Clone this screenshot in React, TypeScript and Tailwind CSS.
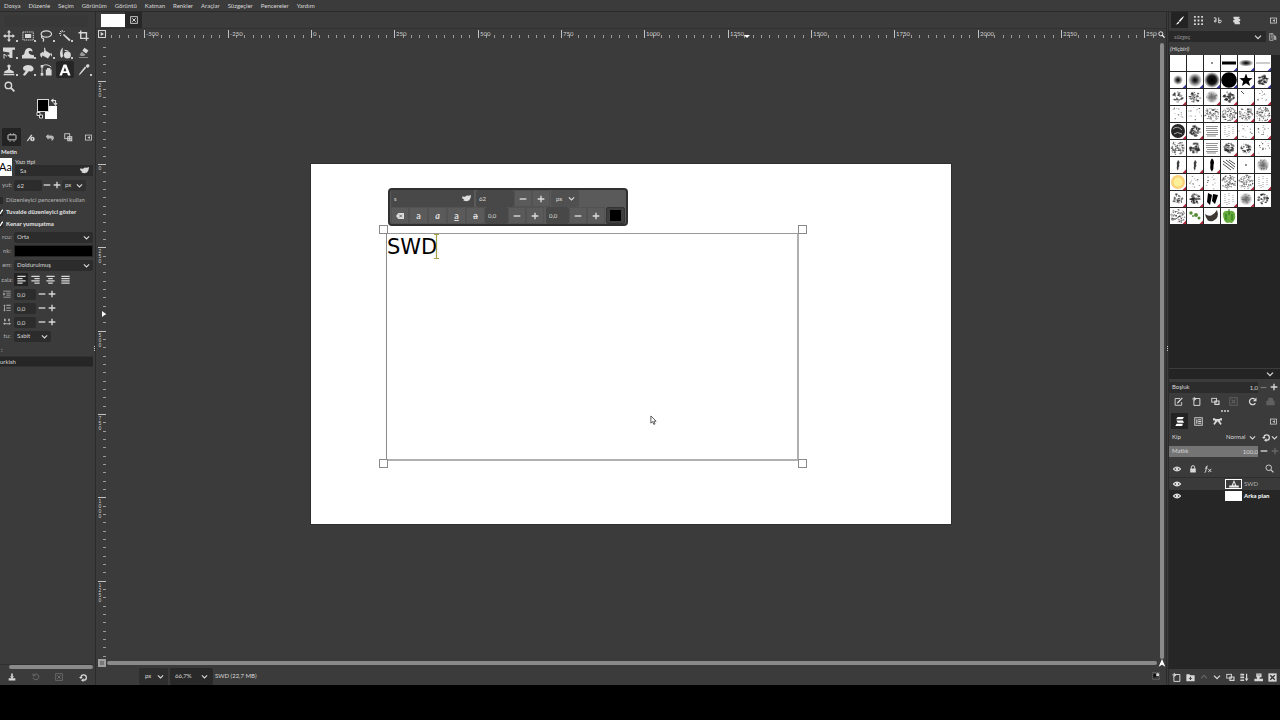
import React from "react";

type Kids = { children: React.ReactNode };

/* ---------- icons (12 x 12 grid) ---------- */

const glyphs = {
  move: <path d="M6 0 8 2.6H6.7V5.3H9.4V4L12 6 9.4 8V6.7H6.7V9.4H8L6 12 4 9.4H5.3V6.7H2.6V8L0 6 2.6 4V5.3H5.3V2.6H4Z" />,
  rect: (
    <>
      <rect x="0.9" y="2" width="10.4" height="8" fill="none" stroke="currentColor" strokeWidth="1" strokeDasharray="1.2 0.7" />
      <rect x="3" y="4" width="6.2" height="4" />
    </>
  ),
  lasso: (
    <g fill="none" stroke="currentColor" strokeWidth="1.2">
      <ellipse cx="6.3" cy="4" rx="5.2" ry="3.2" />
      <path d="M2 6Q.8 7.4 2.4 8.2 4.6 8.8 3 11.6" />
    </g>
  ),
  wand: (
    <>
      <path d="m5 3.9 6.6 5.9-1.3 1.4L3.9 5Z" />
      <path d="M3.2 0v2M0 3.4h2M1 1l1.4 1.4M5.6 1 4.6 2.2M1 5.8l1.2-1" stroke="currentColor" strokeWidth="1" />
    </>
  ),
  crop: <path d="M3 .5V9.200h8.700M.5 3H9.200v8.700" fill="none" stroke="currentColor" strokeWidth="1.500" />,
  transform: (
    <>
      <path d="M0 .4h12v2.3H9.4V11H7.2L4 7.8h2.4V5.4L0 4.5Z" />
      <path d="M1 7v4.6M1 7l3 2.4" stroke="currentColor" strokeWidth="1" fill="none" />
    </>
  ),
  warp: <path d="M0 11.6V8.2C2.4 8 2.5 6.6 2.8 4.8 3.3 1.8 5.8.4 8.4 1.2c2 .7 2.6 2.6 1.7 3.7-.8-1.5-2.6-1.7-3.2-.4C6.3 6 7.4 8 12 8.2v3.4Z" />,
  bucket: (
    <>
      <path d="m4.6 3 6.4 4-3 4.6L2 8.2Z" />
      <path d="M5.2 6.8 4.6.7M11 6.4l1 2.8" stroke="currentColor" strokeWidth="1.2" />
      <path d="M.2 6.6 3 4.8v1.8L1.8 10.8.3 9Z" />
    </>
  ),
  brush: (
    <>
      <path d="M2.4 11C.2 8 .6 3 4 .4 3.5 3 3.3 6.4 4.4 9Z" />
      <circle cx="8.4" cy="7.9" r="3.5" />
      <path d="m5.5 3.2 4 1" stroke="currentColor" />
    </>
  ),
  eraser: (
    <>
      <path d="m7 .8 4.400 3L9 7.200 4.800 4.200Z" />
      <path d="m4 5.200 4 2.900-1.200 1.700H3.400L1.600 8.600Z" opacity=".6" />
      <path d="M1 11.4h10" stroke="currentColor" strokeWidth=".8" opacity=".7" />
    </>
  ),
  stamp: <path d="M5 5.5V3.4A1.6 1.6 0 1 1 7 3.4v2.1l3.8 2V9H1.2V7.5ZM.6 9.8h10.8v1.4H.6Z" />,
  smudge: <path d="M1 3.8C2.2 1 6 .3 9 1.5c2.6 1 3.3 3.6 2 5.1C9.8 8 8 7.7 7 7L3 11.8.8 11 3.8 6.8Q1 7 1 3.8Z" />,
  path: (
    <>
      <path d="M2 11.5V2.2C5 0 8 .5 11.3 3" fill="none" stroke="currentColor" strokeWidth="1" />
      <rect x=".7" y="1" width="2.6" height="2.6" />
      <rect x=".7" y="9" width="2.6" height="2.6" />
      <path d="M7 4h3.4v1.6h1.2v6H5.8v-6H7Z" />
    </>
  ),
  text: <path d="M4.6.6h2.8l4.2 11H9l-.9-2.5H3.8L3 11.6H.4Zm1.3 2.7L4.5 7.2h2.9Z" fillRule="evenodd" />,
  picker: (
    <>
      <path d="M8.2.9c1-1.2 3-.9 3.2.5.1.8-.2 1.2-1.6 2.6L7.9 2.6Z" />
      <path d="M8.4 3.4 3 9.8.8 11.6l1-2.6L7 2.4Z" />
    </>
  ),
  zoom: (
    <g fill="none" stroke="currentColor">
      <circle cx="4.8" cy="4.8" r="3.5" strokeWidth="1.5" />
      <path d="m7.3 7.3 4 4" strokeWidth="2" />
    </g>
  ),
  toolOptions: (
    <>
      <rect x="1.2" y="3.4" width="9.6" height="6" rx=".6" fill="none" stroke="currentColor" strokeWidth="1.1" />
      <path d="M4 3.2V1.6M8 3.2V1.6M3 11h1.4M7.6 11H9" stroke="currentColor" strokeWidth="1" />
    </>
  ),
  device: (
    <>
      <path d="M1.5 9.5 7 2l1.5 1L3 10.4 1 11.4Z" />
      <circle cx="8.6" cy="8" r="3" />
      <path d="M8.6 6.5v3" stroke="#3a3a3a" />
    </>
  ),
  undo: <path d="M1 4.6 4.5 1.4v2h4c2.3 0 3.3 1.6 3.3 3.3S10.5 10.2 8 10.4c1-1 1.6-3-.4-3H4.5v1.7Z" opacity=".8" />,
  images: (
    <>
      <rect x="1" y="1" width="6.6" height="6.6" fill="none" stroke="currentColor" strokeWidth="1.1" />
      <path d="M4.4 4.4H11V11H4.4Zm1.4 1.4v3.8h3.8V5.8Z" fillRule="evenodd" />
      <rect x="6.6" y="6.6" width="2.4" height="2.4" />
    </>
  ),
  dockMenu: (
    <>
      <rect x="1" y="1.8" width="10" height="8.6" fill="none" stroke="currentColor" strokeWidth="1.3" />
      <path d="M8.4 3.7v4.8L4.3 6.1Z" />
    </>
  ),
  bird: <path d="M0 3.200 4 3.800 6.500 2 9 2.200 12 1.200 11.400 5.400 9.400 8.600 5.600 9.800 1.600 8.800 3 7.600.6 6Z" />,
  chevron: <path d="m1.5 4 4.5 4.5L10.5 4" fill="none" stroke="currentColor" strokeWidth="1.9" />,
  chevronUp: <path d="m1.5 8 4.5-4.5L10.5 8" fill="none" stroke="currentColor" strokeWidth="1.8" />,
  minus: <path d="M1 5h10v2H1Z" />,
  plus: <path d="M5 1h2v4h4v2H7v4H5V7H1V5h4Z" />,
  left: <path d="M.5 1h11v1.5H.5Zm0 3h7v1.5h-7Zm0 3h11v1.5H.5Zm0 3h7v1.5h-7Z" />,
  right: <path d="M.5 1h11v1.5H.5Zm4 3h7v1.5h-7Zm-4 3h11v1.5H.5Zm4 3h7v1.5h-7Z" />,
  center: <path d="M.5 1h11v1.5H.5Zm2.4 3h6.2v1.5H2.9ZM.5 7h11v1.5H.5Zm2.4 3h6.2v1.5H2.9Z" />,
  justify: <path d="M.5 1h11v1.5H.5Zm0 3h11v1.5H.5Zm0 3h11v1.5H.5Zm0 3h11v1.5H.5Z" />,
  indent: <path d="M.5 1h11v1.3H.5ZM5 4h6.5v1.3H5ZM5 7h6.5v1.3H5ZM.5 10h11v1.3H.5ZM.5 3.6l3.2 2.5L.5 8.7Z" />,
  lineSpace: <path d="M5 1.2h6.5v1.4H5Zm0 4h6.5v1.4H5Zm0 4h6.5v1.4H5ZM2.2.6l1.8 2.4H2.8v5.6H4L2.2 11.2.4 8.6h1.2V3H.4Z" />,
  letterSpace: <path d="M1.6 1h2.4v4H1.6Zm6.2 0h2.4v4H7.8ZM0 8.5l3-2v1.2h6V6.5l3 2-3 2.1V9.4H3v1.2Z" />,
  download: <path d="M4.8.8h2.4v4.4h2L6 8.4 2.8 5.2h2ZM1 8h10v3.2H1Z" />,
  revert: <path d="M2.4 3.2A4.3 4.3 0 1 1 1.7 7M1.6.8v3.4h3.6" fill="none" stroke="currentColor" strokeWidth="1.5" />,
  closeBox: (
    <>
      <rect x="1" y="1" width="10" height="10" fill="none" stroke="currentColor" strokeWidth="1.3" />
      <path d="m3.4 3.4 5.2 5.2M8.6 3.4 3.4 8.6" stroke="currentColor" strokeWidth="1.5" />
    </>
  ),
  closeSolid: (
    <>
      <rect x=".5" y=".5" width="11" height="11" />
      <path d="m3 3 6 6M9 3 3 9" stroke="#333" strokeWidth="1.800" />
    </>
  ),
  reset: (
    <>
      <path d="M2.6 6A3.6 3.6 0 1 1 6.4 9.600H5" fill="none" stroke="currentColor" strokeWidth="1.700" />
      <path d="M6 7v5L2.600 9.500ZM0 5.200h5L2.500 8Z" />
    </>
  ),
  paint: <path d="M11.600.400Q12 1.600 6.600 8L5 6.600Q10.400.400 11.600.400ZM4.300 7.400 5.900 8.800Q4.600 11.400.800 11.400 3 9.800 4.300 7.400Z" />,
  patterns: <path d="M0 0h2.400v2.400H0Zm4.800 0h2.400v2.400H4.800Zm4.800 0H12v2.400H9.600ZM0 4.800h2.400v2.400H0Zm4.800 0h2.400v2.400H4.800Zm4.800 0H12v2.400H9.600ZM0 9.600h2.400V12H0Zm4.800 0h2.400V12H4.800Zm4.800 0H12V12H9.600Z" />,
  fonts: (
    <g fill="none" stroke="currentColor" strokeWidth="1.300">
      <path d="M1 2.600h3v5.200H2Q.600 6.200 4 5.200M7.600 2v7.400M7.600 6Q11.600 4.600 11 7.600 10.400 9.800 7.600 9" />
    </g>
  ),
  history: <path d="M2 1h8v2.400H7.500l3.500 1v2.400H8l2.500 1V11H3.500V9L1.500 8V5.700L4 5 2 3.800Z" />,
  edit: (
    <>
      <path d="M8 2H1.500v9h8.700V6.800" fill="none" stroke="currentColor" strokeWidth="1.200" />
      <path d="m10.400.6 1.200 1.200L6 8l-2.200.8.800-2Z" />
    </>
  ),
  newDoc: <path d="M2.500 3.500h2V1.200M4 2H10.500v9.200h-8V4M.5 2.500h5M3 0v5" fill="none" stroke="currentColor" strokeWidth="1.300" />,
  copy: (
    <>
      <rect x="1" y="1.800" width="6.400" height="5" fill="none" stroke="currentColor" strokeWidth="1.200" />
      <path d="M4.500 4.500H11.400v6H4.500Zm1.500 1.600v2.800h3.900V6.100Z" fillRule="evenodd" />
    </>
  ),
  refresh: (
    <>
      <path d="M9.800 8.200A4.200 4.200 0 1 1 9 2.900" fill="none" stroke="currentColor" strokeWidth="1.700" />
      <path d="M11.300.5v5H6.500Z" />
    </>
  ),
  open: <path d="M3 5V1h5l1.500 1.500V5h2v6H.5V5Z" />,
  layers: <path d="M3.500 0H12l-2 3H1.500ZM2 4.500h8.500l1.500 3H3.500ZM2 9h8.500L9.500 12H.5Z" />,
  channels: (
    <>
      <rect x="1" y="1" width="10" height="10" fill="none" stroke="currentColor" strokeWidth="1.200" />
      <path d="M3 3h1.500v6H3Zm2.500 0h4v1.200h-4Zm0 2.400h4v1.200h-4Zm0 2.400h4V9h-4Z" />
    </>
  ),
  paths: <path d="M0 1.500h3v1h6v-1h3v3H9.200Q9.400 6.500 11.600 9L10 10.500 6 5.800 2 10.500.4 9Q2.800 6.500 2.800 4.500H0Z" />,
  eye: (
    <>
      <path d="M.4 6Q6 .4 11.600 6 6 11.600.4 6Z" fill="none" stroke="currentColor" strokeWidth="1.600" />
      <circle cx="6" cy="6" r="1.900" />
    </>
  ),
  lock: (
    <>
      <path d="M3.500 6V3.500a2.500 2.500 0 0 1 5 0V6" fill="none" stroke="currentColor" strokeWidth="1.500" />
      <rect x="1.800" y="5.300" width="8.400" height="6" rx=".5" />
    </>
  ),
  fx: (
    <g fill="none" stroke="currentColor" strokeWidth="1.500">
      <path d="M5.600 1.500Q4 .8 3.700 3L2.600 9.500Q2.300 11.400.800 11M1.600 4.600h3.800M6.600 6l4.400 4.500M11 6l-4.800 4.500" />
    </g>
  ),
  search: (
    <g fill="none" stroke="currentColor">
      <circle cx="5" cy="5" r="3.700" strokeWidth="1.200" />
      <path d="m7.800 7.800 3.500 3.500" strokeWidth="1.500" />
    </g>
  ),
  folder: <path d="M.5 1.500h4L6 3h5.500v8H.5ZM5.300 5v1.500H3.800v1.200h1.500v1.500h1.400V7.700h1.500V6.500H6.700V5Z" fillRule="evenodd" />,
  merge: <path d="M.5 1h5v2.300h-5Zm0 3.800h5v2.300h-5Zm0 3.700h5v2.300h-5ZM8 1h1.600v6.400h1.700L8.800 11 6.400 7.400H8Z" />,
  anchor: <path d="M3 .8h7v5H7.500v1.700H12V11H.5V7.500H4V5.800H3Zm1.500 1.400v.9h4v-.9Z" fillRule="evenodd" />,
  clear: (
    <>
      <path d="M3.500 1.500H12v9H3.500L0 6Z" />
      <path d="m5 4 4 4M9 4 5 8" stroke="#555" strokeWidth="1.300" />
    </>
  ),
  nav: <path d="M6 0 11 11.500 6 8.500 1 11.500Z" />,
  quickMask: (
    <>
      <rect x="1" y="1" width="10" height="10" fill="none" stroke="#888" strokeWidth="1" strokeDasharray="2 1" />
      <rect x="2" y="3" width="4" height="5" fill="#111" />
      <rect x="6.500" y="2" width="4" height="4" />
    </>
  ),
  cornerBox: (
    <>
      <rect x=".8" y=".8" width="10.400" height="10.400" fill="none" stroke="currentColor" strokeWidth="1.500" />
      <path d="M4 3v6l5-3Z" />
    </>
  ),
  brushGrid: (
    <>
      <path d="M1 1h5v10H1Z" fill="none" stroke="currentColor" />
      <path d="M2.500 2.500h2M2.500 5h2M2.500 7.500h2" stroke="currentColor" />
      <path d="M7 3q5 1 4 7L8 11Z" opacity=".7" />
    </>
  ),
};

type Glyph = keyof typeof glyphs;

function Icon({ name, className = "size-[9px]" }: { name: Glyph; className?: string }) {
  return (
    <svg viewBox="0 0 12 12" fill="currentColor" className={"shrink-0 " + className} aria-hidden="true">
      {glyphs[name]}
    </svg>
  );
}

function IconButton({ name, label, className = "", icon }: { name: Glyph; label: string; className?: string; icon?: string }) {
  return (
    <button type="button" aria-label={label} className={"flex shrink-0 items-center justify-center " + className}>
      <Icon name={name} className={icon} />
    </button>
  );
}

function Select({ label, value, className = "", chevron = "right-[3px]" }: { label: string; value: string; className?: string; chevron?: string }) {
  return (
    <div className={"relative flex min-w-0 items-center rounded-xs " + className}>
      <select aria-label={label} className="h-full w-full appearance-none bg-transparent px-[3px] py-0 outline-none">
        <option>{value}</option>
      </select>
      <Icon name="chevron" className={"pointer-events-none absolute size-[7px] " + chevron} />
    </div>
  );
}

function Field({ label, value, className = "" }: { label: string; value: string; className?: string }) {
  return <input aria-label={label} defaultValue={value} className={"min-w-0 rounded-xs px-[3px] outline-none " + className} />;
}

function Splitter({ className }: { className: string }) {
  return (
    <div className={"flex w-[3px] shrink-0 flex-col items-center justify-center gap-px border-[#2b2b2b] " + className} aria-hidden="true">
      <i className="size-px bg-[#ccc]" />
      <i className="size-px bg-[#ccc]" />
      <i className="size-px bg-[#ccc]" />
    </div>
  );
}

/* ---------- left dock ---------- */

const tools: [Glyph, string][] = [
  ["move", "Taşıma"], ["rect", "Dikdörtgen seçim"], ["lasso", "Serbest seçim"], ["wand", "Bulanık seçim"], ["crop", "Kırp"],
  ["transform", "Dönüştür"], ["warp", "Çarpıt"], ["bucket", "Kova doldurma"], ["brush", "Boya fırçası"], ["eraser", "Silgi"],
  ["stamp", "Klonla"], ["smudge", "Leke"], ["path", "Yollar"], ["text", "Metin"], ["picker", "Renk seçici"], ["zoom", "Yakınlaştır"],
];

const noCorner = ["crop", "text", "zoom", "eraser", "path"];

function Toolbox() {
  return (
    <div className="grid grid-cols-5">
      {tools.map(([name, label]) => (
        <button
          key={name}
          type="button"
          aria-label={label}
          className={"relative flex h-[17px] items-center justify-center rounded-xs " + (name === "text" ? "bg-[#262626] text-white" : "")}
        >
          <Icon name={name} className={name === "crop" || name === "zoom" || name === "eraser" ? "size-[11px]" : "size-[12px]"} />
          {!noCorner.includes(name) && <span className="absolute right-[1px] bottom-[2px] size-[2px] bg-[#c8c8c8]" />}
        </button>
      ))}
    </div>
  );
}

function Row({ label, children, className = "h-[14px]" }: Kids & { label: React.ReactNode; className?: string }) {
  return (
    <div className={"flex items-center " + className}>
      <span className="flex w-[14px] shrink-0 justify-center overflow-hidden text-[#b4b4b4]">{label}</span>
      {children}
    </div>
  );
}

function Check({ label, checked }: { label: string; checked: boolean }) {
  return (
    <label className={"flex h-[12px] items-center gap-[3px] whitespace-nowrap " + (checked ? "font-bold text-[#e2e2e2]" : "text-[#b4b4b4]")}>
      <span className="relative flex h-[7px] w-[3px] items-center overflow-hidden">
        <input type="checkbox" defaultChecked={checked} className="peer h-[7px] w-[3px] appearance-none bg-[#2a2a2a]" />
        <svg viewBox="0 0 3 6" className="pointer-events-none absolute hidden h-[6px] w-[3px] peer-checked:block" aria-hidden="true">
          <path d="M0 5 2.600.600" stroke="#fff" strokeWidth="1.300" />
        </svg>
      </span>
      {label}
    </label>
  );
}

function Spin({ label, glyph }: { label: string; glyph: Glyph }) {
  return (
    <Row label={<Icon name={glyph} className="size-[8px]" />}>
      <Field label={label} value="0,0" className="h-[11px] w-[22px] bg-[#2c2c2c]" />
      <IconButton name="minus" label={label + " azalt"} className="ml-px h-[11px] w-[10px]" icon="size-[8px]" />
      <IconButton name="plus" label={label + " artır"} className="h-[11px] w-[10px]" icon="size-[8px]" />
    </Row>
  );
}

function LeftDock() {
  return (
    <aside className="flex w-[93px] shrink-0 flex-col overflow-hidden">
      <div className="flex h-[15px] shrink-0 items-end px-1" aria-hidden="true">
        <div className="h-[12px] w-[84px] rounded-xs bg-[#383838]" />
      </div>
      <Toolbox />
      <div className="flex h-[33px] shrink-0 items-start pt-[3px] pl-[36px]">
        <svg viewBox="0 0 22 22" className="size-[22px]" aria-hidden="true">
          <rect x="9" y="8" width="12" height="13" fill="#fff" />
          <rect x="1.500" y="1.500" width="11" height="12" fill="#000" stroke="#d8d8d8" />
          <path d="M16 2.500h3.500V6M17.500.800 15.500 2.500l2 1.800M17.800 5l1.700 2L21 5" fill="none" stroke="#ddd" strokeWidth="1.100" />
          <path d="M1 14.500h3v3H1ZM3.500 17h3v3h-3Z" fill="#111" stroke="#ddd" strokeWidth="1" />
        </svg>
      </div>
      <div className="flex h-[18px] shrink-0 pl-[2px]">
        <IconButton name="toolOptions" label="Araç seçenekleri" className="w-[19px] bg-[#232323]" icon="size-[10px]" />
        <IconButton name="device" label="Aygıt durumu" className="w-[19px]" />
        <IconButton name="undo" label="Geri alma geçmişi" className="w-[19px]" />
        <IconButton name="images" label="Resimler" className="w-[19px]" />
        <IconButton name="dockMenu" label="Sekme menüsü" className="ml-auto w-[10px]" icon="size-[7px]" />
      </div>
      <div className="h-[12px] pt-[2px] pl-px font-bold text-[#e2e2e2]">Metin</div>
      <div className="flex h-[18px] shrink-0 gap-[3px]">
        <div className="flex h-[18px] w-[12px] shrink-0 items-center justify-end overflow-hidden bg-white text-[11px] text-black">Aa</div>
        <div className="min-w-0 flex-1">
          <div className="h-[7px] leading-[7px]">Yazı tipi</div>
          <div className="flex h-[11px] items-center bg-[#2c2c2c] pr-1">
            <Field label="Yazı tipi" value="Sa" className="h-full flex-1 bg-transparent pl-[5px]" />
            <Icon name="bird" />
          </div>
        </div>
      </div>
      <Row label="yut:" className="h-[18px]">
        <Field label="Boyut" value="62" className="h-[11px] w-[28px] bg-[#2c2c2c]" />
        <IconButton name="minus" label="Küçült" className="h-[11px] w-[10px]" icon="size-[8px]" />
        <IconButton name="plus" label="Büyüt" className="h-[11px] w-[10px]" icon="size-[8px]" />
        <Select label="Birim" value="px" className="h-[11px] w-[24px] bg-[#303030]" />
      </Row>
      <div>
        <Check label="Düzenleyici penceresini kullan" checked={false} />
        <Check label="Tuvalde düzenleyici göster" checked />
        <Check label="Kenar yumuşatma" checked />
      </div>
      <Row label="rcu:">
        <Select label="İpucu" value="Orta" className="h-[11px] flex-1 bg-[#2c2c2c]" />
      </Row>
      <Row label="nk:">
        <button type="button" aria-label="Renk" className="h-[12px] flex-1 border border-[#262626] bg-black" />
      </Row>
      <Row label="em:">
        <Select label="Biçem" value="Doldurulmuş" className="h-[11px] flex-1 bg-[#2c2c2c]" />
      </Row>
      <Row label="zala:" className="h-[15px]">
        <IconButton name="left" label="Sola yasla" className="h-[13px] w-[14px] bg-[#232323]" />
        <IconButton name="right" label="Sağa yasla" className="h-[13px] w-[15px]" />
        <IconButton name="center" label="Ortala" className="h-[13px] w-[15px]" />
        <IconButton name="justify" label="İki yana yasla" className="h-[13px] w-[15px]" />
      </Row>
      <div>
        <Spin label="Girinti" glyph="indent" />
        <Spin label="Satır aralığı" glyph="lineSpace" />
        <Spin label="Harf aralığı" glyph="letterSpace" />
      </div>
      <Row label="tu:">
        <Select label="Kutu" value="Sabit" className="h-[11px] w-[37px] bg-[#2c2c2c]" />
      </Row>
      <div className="h-[13px] pl-px leading-[13px]">:</div>
      <input aria-label="Dil" defaultValue="urkish" className="h-[11px] w-full shrink-0 border-y border-[#303030] bg-[#262626] outline-none" />
      <div className="mt-auto border-t border-[#303030] pl-[9px]">
        <div className="h-[4px] rounded-full bg-[#8a8a8a]" />
      </div>
      <div className="flex h-[16px] shrink-0 items-center justify-between pr-[5px] pl-[8px]">
        <IconButton name="download" label="Ayarları kaydet" icon="size-[8px]" />
        <IconButton name="revert" label="Ayarları geri yükle" className="text-[#6c6c6c]" icon="size-[8px]" />
        <IconButton name="closeBox" label="Ayarları sil" className="text-[#6c6c6c]" icon="size-[8px]" />
        <IconButton name="reset" label="Sıfırla" icon="size-[9px]" />
      </div>
    </aside>
  );
}

/* ---------- rulers ---------- */

const STEP = 25 / 3;

function HorizontalRuler() {
  const zero = 204;
  const ticks = Array.from({ length: 126 }, (_, i) => i - 24);
  return (
    <div className="relative h-[10px] min-w-0 flex-1 overflow-hidden">
      <svg className="absolute top-0 left-0 h-[10px] w-[1100px]" fill="#d0d0d0" aria-hidden="true">
        {ticks.map((t) => {
          const x = Math.round(zero + t * STEP);
          const major = t % 10 === 0;
          return (
            <g key={t}>
              <rect x={x} y={major ? 1 : 6} width="1" height={major ? 8 : 3} opacity={major ? 0.9 : 0.65} />
              {major && <text x={x + 2} y="7" className="text-[6px]">{t * 25}</text>}
            </g>
          );
        })}
        <path d="M637 6h6l-3 3Z" fill="#fff" />
      </svg>
    </div>
  );
}

function VerticalRuler() {
  const zero = 125;
  const ticks = Array.from({ length: 74 }, (_, i) => i - 14);
  return (
    <div className="relative w-[11px] shrink-0 overflow-hidden">
      <svg className="absolute top-0 left-0 h-[640px] w-[11px]" fill="#d0d0d0" aria-hidden="true">
        {ticks.map((t) => {
          const y = Math.round(zero + t * STEP);
          const major = t % 10 === 0;
          return (
            <g key={t}>
              <rect x={major ? 2 : 7} y={y} width={major ? 8 : 3} height="1" opacity={major ? 0.9 : 0.65} />
              {major &&
                String(Math.abs(t * 25)).split("").map((c, i) => (
                  <text key={i} x="4" y={y + 6 + i * 5} textAnchor="middle" className="font-['Liberation_Sans',sans-serif] text-[5px]">{c}</text>
                ))}
            </g>
          );
        })}
        <path d="M6 272v6l4-3Z" fill="#fff" />
      </svg>
    </div>
  );
}

/* ---------- canvas ---------- */

function TextToolbar() {
  const box = "h-[17px] border border-[#525252] bg-[#5a5a5a]";
  const cell = box + " w-[18px]";
  const wide = box + " w-[19px]";
  const letter = wide + " text-[9px] leading-[13px]";
  const field = "h-[17px] bg-[#484848]";
  return (
    <div className="absolute top-[149px] left-[281px] flex w-[240px] flex-col rounded-sm border-2 border-[#303030] bg-[#5a5a5a] px-px text-[#dedede]">
      <div className="flex h-[17px]">
        <div className="flex w-[83px] items-center bg-[#484848] pr-[3px]">
          <Field label="Yazı tipi" value="s" className="h-full flex-1 bg-transparent" />
          <Icon name="bird" />
        </div>
        <Field label="Yazı boyutu" value="62" className={"ml-[2px] w-[38px] " + field} />
        <IconButton name="minus" label="Yazıyı küçült" className={cell} icon="size-[8px]" />
        <IconButton name="plus" label="Yazıyı büyüt" className={cell} icon="size-[8px]" />
        <Select label="Yazı birimi" value="px" className="ml-px h-[17px] w-[28px] bg-[#505050] pl-[2px]" chevron="right-[4px]" />
      </div>
      <div className="flex h-[17px] items-center">
        <IconButton name="clear" label="Biçimi temizle" className={cell} icon="size-[8px]" />
        <button type="button" className={letter + " font-bold"}>a</button>
        <button type="button" className={letter + " font-bold italic"}>a</button>
        <button type="button" className={letter + " font-bold underline"}>a</button>
        <button type="button" className={letter + " font-bold line-through"}>a</button>
        <Field label="Taban çizgisi" value="0,0" className={"w-[23px] " + field} />
        <IconButton name="minus" label="Taban çizgisini azalt" className={cell} icon="size-[8px]" />
        <IconButton name="plus" label="Taban çizgisini artır" className={cell} icon="size-[8px]" />
        <Field label="Karakter aralığı" value="0,0" className={"ml-[2px] w-[23px] " + field} />
        <IconButton name="minus" label="Karakter aralığını azalt" className={cell} icon="size-[8px]" />
        <IconButton name="plus" label="Karakter aralığını artır" className={cell} icon="size-[8px]" />
        <button type="button" aria-label="Yazı rengi" className="ml-auto flex h-[17px] w-[19px] items-center justify-center rounded-xs border border-[#333] bg-[#3f3f3f]">
          <span className="size-[11px] bg-black" />
        </button>
      </div>
    </div>
  );
}

function Canvas() {
  const handle = "absolute size-[9px] border border-[#8a8a8a] bg-white";
  return (
    <main className="relative min-w-0 flex-1 overflow-hidden">
      <div className="absolute top-[124px] left-[203px] h-[362px] w-[642px] border border-[#2e2e2e] bg-white" />
      <div className="absolute top-[194px] left-[279px] h-[228px] w-[413px] border border-r-2 border-b-2 border-[#b0b0b0] border-t-[#999] border-l-[#8c8c8c] text-black">
        <span className="block font-['DejaVu_Sans',sans-serif] text-[21px] leading-[27px]">SWD</span>
        <svg viewBox="0 0 5 25" className="absolute top-0 left-[47px] h-[25px] w-[5px]" aria-hidden="true">
          <path d="M2.500 0v24M0 24.500h5M0 .5h5" stroke="#a3a04a" strokeWidth="1.200" />
        </svg>
        <span className={handle + " -top-[9px] -left-[8px]"} />
        <span className={handle + " -top-[9px] -right-[10px]"} />
        <span className={handle + " -bottom-[9px] -left-[8px]"} />
        <span className={handle + " -right-[10px] -bottom-[9px]"} />
      </div>
      <TextToolbar />
      <svg viewBox="0 0 8 12" className="absolute top-[376px] left-[543px] h-[11px] w-[7px]" aria-hidden="true">
        <path d="M1 .8V9l2-1.700 1.400 3.200 1.300-.6L4.400 6.800H7Z" fill="#fff" stroke="#333" strokeWidth=".9" />
      </svg>
    </main>
  );
}

function Workspace() {
  return (
    <section className="flex min-w-0 flex-1 flex-col">
      <div className="flex h-[16px] shrink-0 pl-[5px]">
        <button type="button" aria-label="Adsız resim" className="mt-[2px] h-[13px] w-[24px] bg-white" />
        <IconButton name="closeBox" label="Resmi kapat" className="w-[17px] bg-[#272727]" icon="size-[8px]" />
      </div>
      <div className="flex shrink-0 border-t border-[#323232]">
        <IconButton name="cornerBox" label="Resim menüsü" className="w-[11px]" icon="size-[8px]" />
        <HorizontalRuler />
        <IconButton name="zoom" label="Pencereye sığdır" className="w-[9px] text-white" icon="size-[7px]" />
      </div>
      <div className="flex min-h-0 flex-1">
        <VerticalRuler />
        <Canvas />
        <div className="flex w-[9px] shrink-0 justify-center pt-[4px]">
          <div className="w-[4px] rounded-full bg-[#8a8a8a]" />
        </div>
      </div>
      <div className="flex h-[8px] shrink-0 items-center">
        <button type="button" aria-label="Hızlı maske" className="ml-[2px] size-[8px] border-2 border-[#a0a0a0] bg-[#777]" />
        <div className="ml-px h-[4px] flex-1 rounded-full bg-[#8a8a8a]" />
        <IconButton name="nav" label="Gezinti" className="w-[9px] text-white" icon="size-[8px]" />
      </div>
      <footer className="flex h-[18px] shrink-0 items-center pl-[43px]">
        <Select label="Birim" value="px" className="h-[17px] w-[29px] bg-[#2e2e2e] pl-[3px]" chevron="right-[4px]" />
        <Select label="Yakınlaştırma" value="66,7%" className="ml-[2px] h-[17px] w-[43px] bg-[#292929] pl-[2px]" chevron="right-[5px]" />
        <span className="pl-[2px] whitespace-nowrap">SWD (22,7 MB)</span>
        <Icon name="quickMask" className="mr-[6px] ml-auto size-[8px]" />
      </footer>
    </section>
  );
}

/* ---------- brushes ---------- */

type Kind = "blank" | "dot" | "bar" | "oval" | "line" | "soft" | "haze" | "disc" | "rough" | "star" | "blob" | "spray" | "sparse" | "grain" | "lines" | "stroke" | "sun" | "pepper" | "leaf" | "slash" | "tick" | "banana" | "shards" | "hatch";

const brushes: [Kind, number][] = [
  ["blank", 0], ["blank", 0], ["dot", 0], ["bar", 1], ["oval", 1], ["line", 1],
  ["soft", 5], ["soft", 7], ["soft", 8], ["disc", 1], ["star", 1], ["blob", 1],
  ["spray", 2], ["spray", 0], ["haze", 2], ["blob", 2], ["tick", 2], ["sparse", 2],
  ["sparse", 0], ["sparse", 0], ["grain", 0], ["grain", 2], ["grain", 2], ["grain", 2],
  ["rough", 2], ["blob", 2], ["lines", 0], ["hatch", 2], ["sparse", 2], ["sparse", 2],
  ["grain", 0], ["blob", 0], ["lines", 0], ["blob", 2], ["spray", 2], ["sparse", 0],
  ["stroke", 1], ["stroke", 1], ["stroke", 2], ["slash", 0], ["dot", 0], ["haze", 0],
  ["sun", 2], ["sparse", 2], ["sparse", 0], ["grain", 0], ["grain", 2], ["hatch", 2],
  ["spray", 2], ["blob", 2], ["shards", 2], ["hatch", 2], ["haze", 2], ["spray", 0],
  ["grain", 2], ["leaf", 2], ["banana", 0], ["pepper", 0],
];

function speckles(seed: number, count: number, spread: number, size: number) {
  let s = seed * 7919 + 13;
  const next = () => {
    s = (s * 16807) % 2147483647;
    return s / 2147483647;
  };
  return Array.from({ length: count }, (_, i) => {
    const angle = next() * Math.PI * 2;
    const r = Math.sqrt(next()) * spread;
    return (
      <ellipse key={i} cx={8 + Math.cos(angle) * r} cy={8 + Math.sin(angle) * r} rx={size * (0.5 + next())} ry={size * (0.4 + next() * 0.6)} opacity={0.35 + next() * 0.55} />
    );
  });
}

function BrushArt({ kind, seed, n }: { kind: Kind; seed: number; n: number }) {
  switch (kind) {
    case "dot": return <circle cx="8" cy="8" r=".8" />;
    case "bar": return <rect x="1" y="6.500" width="14" height="3" />;
    case "oval": return <ellipse cx="8" cy="8" rx="7.500" ry="3.600" fill="url(#soft)" />;
    case "line": return <rect x="1" y="7.500" width="14" height="1" opacity=".4" />;
    case "soft": return <circle cx="8" cy="8" r={n} fill={n === 8 ? "url(#firm)" : "url(#soft)"} />;
    case "haze": return <g opacity=".6"><circle cx="8" cy="8" r="6.500" fill="url(#soft)" />{speckles(seed, 30, 5.500, 0.700)}</g>;
    case "disc": return <circle cx="8" cy="8" r="7.800" />;
    case "rough": return <g><circle cx="8" cy="8" r="7" opacity=".85" /><path d="M3 6q4-4 9 1M4 11q3-3 8 0" stroke="#aaa" fill="none" /></g>;
    case "star": return <path d="m8 1.600 1.700 4.500 4.900.2-3.800 3 1.300 4.700L8 11.300 3.900 14l1.300-4.700-3.800-3 4.900-.2Z" />;
    case "blob": return <g opacity=".85">{speckles(seed, 34, 5, 1.300)}</g>;
    case "spray": return <g opacity=".8">{speckles(seed, 34, 5.200, 1)}</g>;
    case "sparse": return <g opacity=".85">{speckles(seed, 14, 7, 0.650)}</g>;
    case "grain": return <g opacity=".8">{speckles(seed, 90, 7.200, 0.700)}</g>;
    case "lines": return <path d="M2 3.500h12M2 5.500h11M2 7.500h12M3 9.500h11M2 11.500h12M3 13h9" stroke="#000" strokeWidth=".6" opacity=".7" />;
    case "hatch": return <path d="M4 3v9M8 2v3M8 8v5M12 4v8M6 11v3" stroke="#000" strokeWidth=".4" strokeDasharray="1 1" />;
    case "stroke": return n === 2
      ? <path d="M8 1.500Q11 4 9.500 8 10 12 8 14.500 5.500 12 6.500 8 5.500 4 8 1.500Z" />
      : <path d="M8 3Q10.500 5 9 7 10 9 8.500 10.500 9 12 7.500 13.500 6 11 7 9 6 6 8 3Z" opacity=".75" />;
    case "sun": return <g><circle cx="8" cy="8" r="7" fill="#fbd27a" /><circle cx="8" cy="8" r="4.500" fill="#fdf09a" /></g>;
    case "slash": return <path d="M2 4l11 8M2 7l8 6M5 3l9 7M8 3l6 4" stroke="#000" strokeWidth=".7" />;
    case "tick": return <path d="M3 2l3 3" stroke="#000" strokeWidth=".7" />;
    case "leaf": return <g fill="#558c33"><circle cx="4" cy="5" r="1.700" /><circle cx="9" cy="7" r="2" /><circle cx="12" cy="10" r="1.500" /><circle cx="6" cy="8" r="1" /></g>;
    case "banana": return <path d="M1 6q6 5 12-4 3 8-4 11-6 2-8-7Z" fill="#3c3730" />;
    case "shards": return <path d="M4 2l4 2-2 10-3-3ZM9 3l5 1-3 9-3-3Z" />;
    case "pepper": return <g><path d="M2 5q2-3 6-2 5-1 6 3 1 6-3 9-3-1-5 0-4-2-4-10Z" fill="#63ab3a" /><path d="M8 1v6M5 6v6M11 6v6" stroke="#2f6d1d" /></g>;
    default: return null;
  }
}

function Brushes() {
  return (
    <div className="grid grid-cols-[repeat(6,17px)]">
      {brushes.map(([kind, n], i) => {
        const mark = n === 0 ? "none" : i < 12 ? "#3a3a9c" : "#b02a3c";
        return (
          <button key={i} type="button" aria-label={"Fırça " + (i + 1)} className="size-[17px] pr-px pb-px">
            <svg viewBox="0 0 16 16" className="size-[16px] bg-white" aria-hidden="true">
              <BrushArt kind={kind} seed={i + 1} n={n} />
              <path d="M16 12.500V16h-3.500Z" fill={mark} />
            </svg>
          </button>
        );
      })}
    </div>
  );
}

/* ---------- right dock ---------- */

function Dots() {
  return (
    <div className="flex h-[4px] shrink-0 items-center justify-center gap-px" aria-hidden="true">
      <i className="size-[2px] bg-[#aaa]" />
      <i className="size-[2px] bg-[#aaa]" />
      <i className="size-[2px] bg-[#aaa]" />
    </div>
  );
}

function Layer({ name, children, className }: Kids & { name: string; className: string }) {
  return (
    <li className={"flex h-[12px] items-center " + className}>
      <IconButton name="eye" label={name + " görünürlüğü"} className="w-[16px] text-[#e4e4e4]" icon="size-[8px]" />
      <span className="mr-[2px] ml-[40px] flex h-[10px] w-[17px] items-center justify-center">{children}</span>
      {name}
    </li>
  );
}

function RightDock() {
  return (
    <aside className="flex w-[111px] shrink-0 flex-col overflow-hidden">
      <svg className="absolute size-0" aria-hidden="true">
        <defs>
          <radialGradient id="soft">
            <stop offset="0" stopColor="#000" />
            <stop offset=".35" stopColor="#000" stopOpacity=".75" />
            <stop offset="1" stopColor="#000" stopOpacity="0" />
          </radialGradient>
          <radialGradient id="firm">
            <stop offset="0" stopColor="#000" />
            <stop offset=".55" stopColor="#000" stopOpacity=".9" />
            <stop offset="1" stopColor="#000" stopOpacity="0" />
          </radialGradient>
        </defs>
      </svg>
      <div className="flex h-[16px] shrink-0 pl-[2px]">
        <IconButton name="paint" label="Fırçalar" className="w-[17px] bg-[#232323] text-white" />
        <IconButton name="patterns" label="Desenler" className="w-[20px]" />
        <IconButton name="fonts" label="Yazı tipleri" className="w-[19px]" />
        <IconButton name="history" label="Belge geçmişi" className="w-[18px]" />
        <IconButton name="dockMenu" label="Sekme menüsü" className="mr-[3px] ml-auto w-[8px]" icon="size-[7px]" />
      </div>
      <div className="mt-[3px] flex h-[11px] shrink-0 items-center">
        <div className="flex h-full min-w-0 flex-1 items-center bg-[#292929] pr-1">
          <input aria-label="süzgeç" placeholder="süzgeç" className="h-full min-w-0 flex-1 px-[5px] italic outline-none placeholder:text-[#8f8f8f]" />
          <Icon name="chevron" className="size-[8px]" />
        </div>
        <Icon name="brushGrid" className="mx-[3px] size-[8px]" />
      </div>
      <div className="h-[13px] shrink-0 pl-px leading-[13px] italic">(Hiçbiri)</div>
      <div className="min-h-0 flex-1 basis-[312px] overflow-hidden bg-[#242424] pl-px">
        <Brushes />
      </div>
      <button type="button" aria-label="Etiketler" className="flex h-[12px] shrink-0 items-center justify-end border-y border-[#3c3c3c] bg-[#242424] pr-[6px]">
        <Icon name="chevron" className="size-[8px]" />
      </button>
      <div className="flex h-[14px] shrink-0 items-center">
        <label className="flex h-[11px] min-w-0 flex-1 items-center bg-[#2c2c2c] pl-[3px]">
          Boşluk
          <input defaultValue="1,0" className="h-full min-w-0 flex-1 text-right outline-none" />
        </label>
        <IconButton name="minus" label="Boşluğu azalt" className="w-[10px] text-[#777]" icon="size-[7px]" />
        <IconButton name="plus" label="Boşluğu artır" className="w-[12px]" icon="size-[8px]" />
      </div>
      <div className="flex h-[15px] shrink-0 items-center justify-around">
        <IconButton name="edit" label="Fırçayı düzenle" />
        <IconButton name="newDoc" label="Yeni fırça" />
        <IconButton name="copy" label="Fırçayı çoğalt" />
        <IconButton name="closeBox" label="Fırçayı sil" className="text-[#606060]" />
        <IconButton name="refresh" label="Yenile" />
        <IconButton name="open" label="Fırçayı aç" className="text-[#606060]" />
      </div>
      <Dots />
      <div className="flex h-[16px] shrink-0 pl-[2px]">
        <IconButton name="layers" label="Katmanlar" className="w-[17px] bg-[#232323] text-white" />
        <IconButton name="channels" label="Kanallar" className="w-[20px]" />
        <IconButton name="paths" label="Yollar" className="w-[19px]" />
        <IconButton name="dockMenu" label="Sekme menüsü" className="mr-[3px] ml-auto w-[8px]" icon="size-[7px]" />
      </div>
      <div className="flex h-[16px] shrink-0 items-center">
        <label htmlFor="mode" className="pl-[3px]">Kip</label>
        <div className="relative ml-auto flex h-[11px] items-center">
          <select id="mode" className="h-full w-[34px] appearance-none py-0 outline-none">
            <option>Normal</option>
          </select>
          <Icon name="chevron" className="pointer-events-none absolute right-[4px] size-[7px]" />
        </div>
        <button type="button" aria-label="Kip grubu" className="flex w-[20px] items-center justify-center">
          <Icon name="reset" className="size-[9px]" />
          <Icon name="chevron" className="size-[7px]" />
        </button>
      </div>
      <div className="flex h-[12px] shrink-0 items-center">
        <label className="flex h-[11px] min-w-0 flex-1 items-center bg-[#747474] pl-[3px] text-[#d8d8d8]">
          Matlık
          <input defaultValue="100,0" className="h-full min-w-0 flex-1 text-right outline-none" />
        </label>
        <IconButton name="minus" label="Matlığı azalt" className="w-[11px]" icon="size-[8px]" />
        <IconButton name="plus" label="Matlığı artır" className="w-[11px] text-[#666]" icon="size-[8px]" />
      </div>
      <div className="mt-[3px] flex h-[18px] shrink-0 items-center border-b border-[#2e2e2e]">
        <IconButton name="eye" label="Görünürlük" className="w-[16px]" icon="size-[8px]" />
        <IconButton name="lock" label="Kilit" className="w-[15px]" icon="size-[8px]" />
        <IconButton name="fx" label="Etkiler" className="w-[15px]" icon="size-[8px]" />
        <IconButton name="search" label="Katman ara" className="mr-[6px] ml-auto" />
      </div>
      <ul className="min-h-0 flex-1 basis-[190px] bg-[#262626]">
        <Layer name="SWD" className="bg-[#3a3a3a] text-[#b0b0b0]">
          <span className="flex h-full w-full items-center justify-center border border-white bg-[#3c3c3c]">
            <svg viewBox="0 0 12 10" className="h-[8px] w-[10px]" fill="#e8e8e8" aria-hidden="true">
              <path d="M6 0 9 7h3v2.500H0V7h3Zm0 3L4.700 6.500h2.600Z" fillRule="evenodd" />
            </svg>
          </span>
        </Layer>
        <Layer name="Arka plan" className="font-bold text-white">
          <span className="h-full w-full bg-white" />
        </Layer>
      </ul>
      <div className="flex h-[16px] shrink-0 items-center justify-around">
        <IconButton name="newDoc" label="Yeni katman" />
        <IconButton name="folder" label="Yeni katman grubu" />
        <IconButton name="chevronUp" label="Katmanı yükselt" className="text-[#666]" icon="size-[8px]" />
        <IconButton name="chevron" label="Katmanı alçalt" icon="size-[8px]" />
        <IconButton name="copy" label="Katmanı çoğalt" />
        <IconButton name="merge" label="Katmanları birleştir" />
        <IconButton name="anchor" label="Maske ekle" />
        <IconButton name="closeSolid" label="Katmanı sil" />
      </div>
    </aside>
  );
}

const menus = ["Dosya", "Düzenle", "Seçim", "Görünüm", "Görüntü", "Katman", "Renkler", "Araçlar", "Süzgeçler", "Pencereler", "Yardım"];

export default function App() {
  return (
    <div className="flex h-screen flex-col overflow-hidden bg-black pb-[35px] font-['Lato','Noto_Sans',sans-serif] text-[6px] leading-[8px] text-[#d8d8d8]">
      <nav className="flex h-[12px] shrink-0 items-center gap-2 border-b border-[#2a2a2a] bg-[#3b3b3b] pl-1">
        {menus.map((m) => (
          <button key={m} type="button">{m}</button>
        ))}
      </nav>
      <div className="flex min-h-0 flex-1 bg-[#3b3b3b]">
        <LeftDock />
        <Splitter className="border-r" />
        <Workspace />
        <Splitter className="border-x" />
        <RightDock />
      </div>
    </div>
  );
}
